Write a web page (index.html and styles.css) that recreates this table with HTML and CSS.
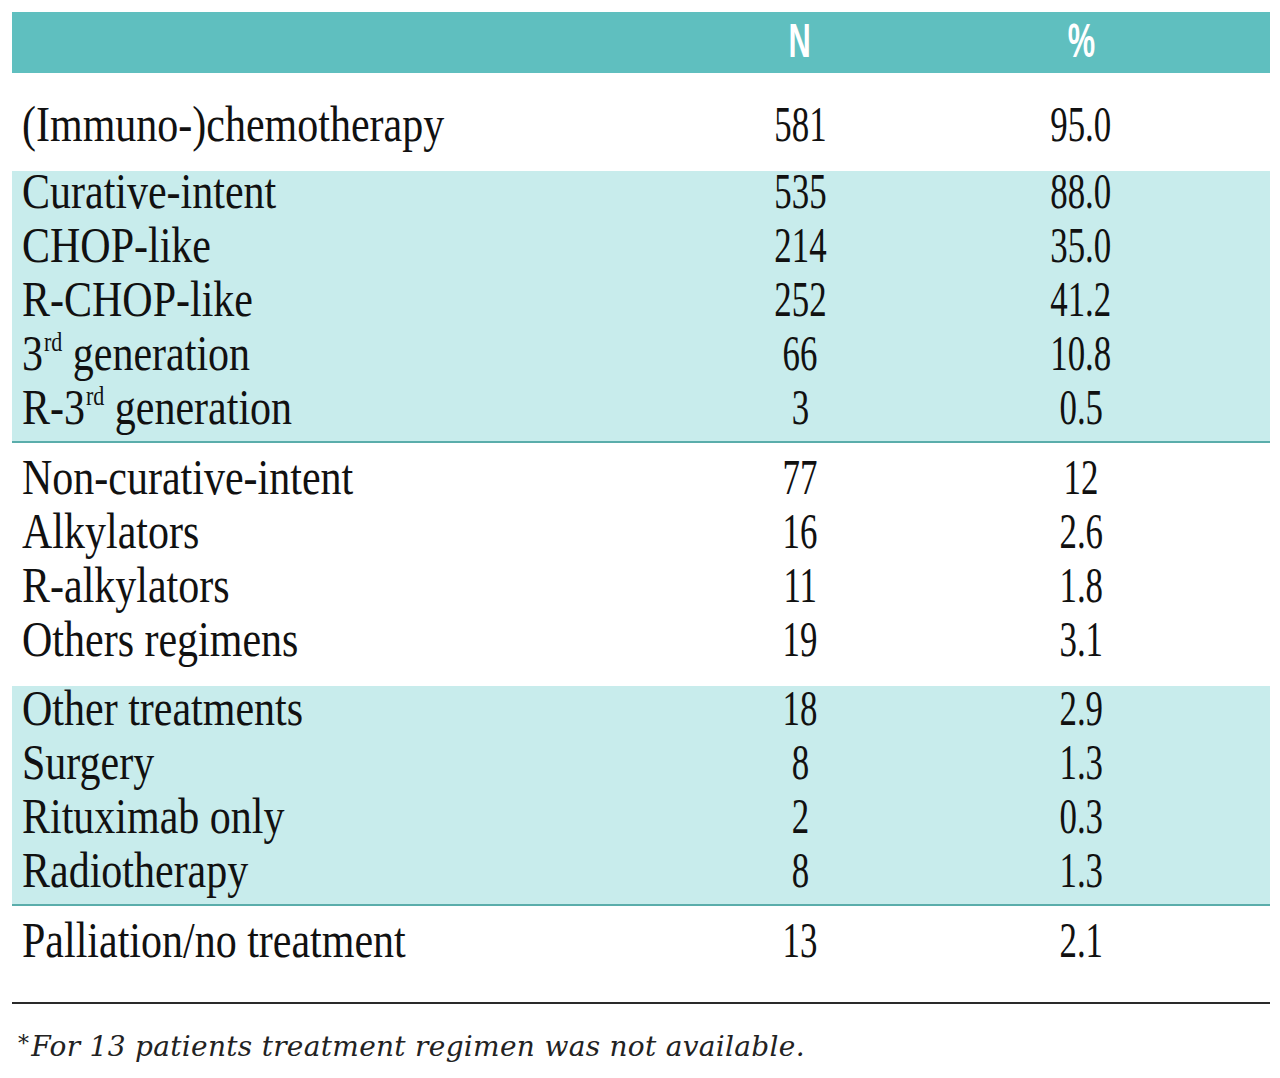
FILE: index.html
```html
<!DOCTYPE html>
<html>
<head>
<meta charset="utf-8">
<link rel="stylesheet" href="styles.css">
</head>
<body>
<div class="page">
  <div class="head row">
    <div></div>
    <div class="hcell"><span class="hx">N</span></div>
    <div class="hcell"><span class="hx">%</span></div>
  </div>

  <div class="group first">
    <div class="row"><div class="lbl"><span>(Immuno-)chemotherapy</span></div><div class="num"><span>581</span></div><div class="num"><span>95.0</span></div></div>
  </div>

  <div class="group band b1">
    <div class="row"><div class="lbl"><span>Curative-intent</span></div><div class="num"><span>535</span></div><div class="num"><span>88.0</span></div></div>
    <div class="row"><div class="lbl"><span>CHOP-like</span></div><div class="num"><span>214</span></div><div class="num"><span>35.0</span></div></div>
    <div class="row"><div class="lbl"><span>R-CHOP-like</span></div><div class="num"><span>252</span></div><div class="num"><span>41.2</span></div></div>
    <div class="row"><div class="lbl"><span>3<sup>rd</sup> generation</span></div><div class="num"><span>66</span></div><div class="num"><span>10.8</span></div></div>
    <div class="row"><div class="lbl"><span>R-3<sup>rd</sup> generation</span></div><div class="num"><span>3</span></div><div class="num"><span>0.5</span></div></div>
  </div>

  <div class="group plain g2">
    <div class="row"><div class="lbl"><span>Non-curative-intent</span></div><div class="num"><span>77</span></div><div class="num"><span>12</span></div></div>
    <div class="row"><div class="lbl"><span>Alkylators</span></div><div class="num"><span>16</span></div><div class="num"><span>2.6</span></div></div>
    <div class="row"><div class="lbl"><span>R-alkylators</span></div><div class="num"><span>11</span></div><div class="num"><span>1.8</span></div></div>
    <div class="row"><div class="lbl"><span>Others regimens</span></div><div class="num"><span>19</span></div><div class="num"><span>3.1</span></div></div>
  </div>

  <div class="group band b3">
    <div class="row"><div class="lbl"><span>Other treatments</span></div><div class="num"><span>18</span></div><div class="num"><span>2.9</span></div></div>
    <div class="row"><div class="lbl"><span>Surgery</span></div><div class="num"><span>8</span></div><div class="num"><span>1.3</span></div></div>
    <div class="row"><div class="lbl"><span>Rituximab only</span></div><div class="num"><span>2</span></div><div class="num"><span>0.3</span></div></div>
    <div class="row"><div class="lbl"><span>Radiotherapy</span></div><div class="num"><span>8</span></div><div class="num"><span>1.3</span></div></div>
  </div>

  <div class="group last">
    <div class="row"><div class="lbl"><span>Palliation/no treatment</span></div><div class="num"><span>13</span></div><div class="num"><span>2.1</span></div></div>
  </div>

  <p class="note"><span class="ast">*</span>For 13 patients treatment regimen was not available.</p>
</div>
</body>
</html>
```
FILE: styles.css
```css
html, body {
  margin: 0;
  padding: 0;
  background: #ffffff;
}

.page {
  padding: 12px 10px 0 12px;
  font-family: "Liberation Serif", "Times New Roman", serif;
  color: #111111;
}

.row {
  display: grid;
  grid-template-columns: 1fr 140px 140px;
  column-gap: 141px;
  padding: 0 119px 0 10px;
  font-size: 42px;
  line-height: 42px;
  padding-bottom: 12px;
}

.head {
  background: #5fbfbf;
  height: 61px;
  padding-bottom: 0;
  align-items: center;
}

.hcell {
  text-align: center;
  font-family: "Liberation Sans", Arial, sans-serif;
  font-weight: bold;
  font-size: 46px;
  line-height: 46px;
  color: #ffffff;
  margin-top: -6px;
}

.hx {
  display: inline-block;
  transform: scale(0.67, 1.05);
}

.lbl {
  white-space: nowrap;
}

.lbl span {
  display: inline-block;
  transform: scale(1.0, 1.2);
  transform-origin: 0 60%;
}

.lbl sup {
  font-size: 22px;
  line-height: 0;
  vertical-align: 0;
  position: relative;
  top: -16px;
  margin-left: 1px;
}

.num {
  text-align: center;
}

.num span {
  display: inline-block;
  transform: scale(0.83, 1.2);
  transform-origin: 50% 60%;
}

.band {
  background: #c8ecec;
  border-bottom: 2px solid #5aadab;
}

.first {
  padding-top: 31px;
  padding-bottom: 13px;
}

.b1 {
  padding-top: 0;
}

.g2 {
  padding-top: 14px;
  padding-bottom: 13px;
}

.b3 {
  padding-top: 2px;
}

.last {
  padding-top: 14px;
  padding-bottom: 28px;
  border-bottom: 2px solid #2a2a2a;
}

.note {
  margin: 0;
  padding: 26px 0 0 6px;
  font-family: "DejaVu Serif", "Liberation Serif", serif;
  font-style: italic;
  font-size: 28px;
  line-height: 34px;
  letter-spacing: 0.3px;
  color: #222222;
}

.ast {
  font-size: 22px;
  position: relative;
  top: -5px;
  margin-right: 2px;
}
```
